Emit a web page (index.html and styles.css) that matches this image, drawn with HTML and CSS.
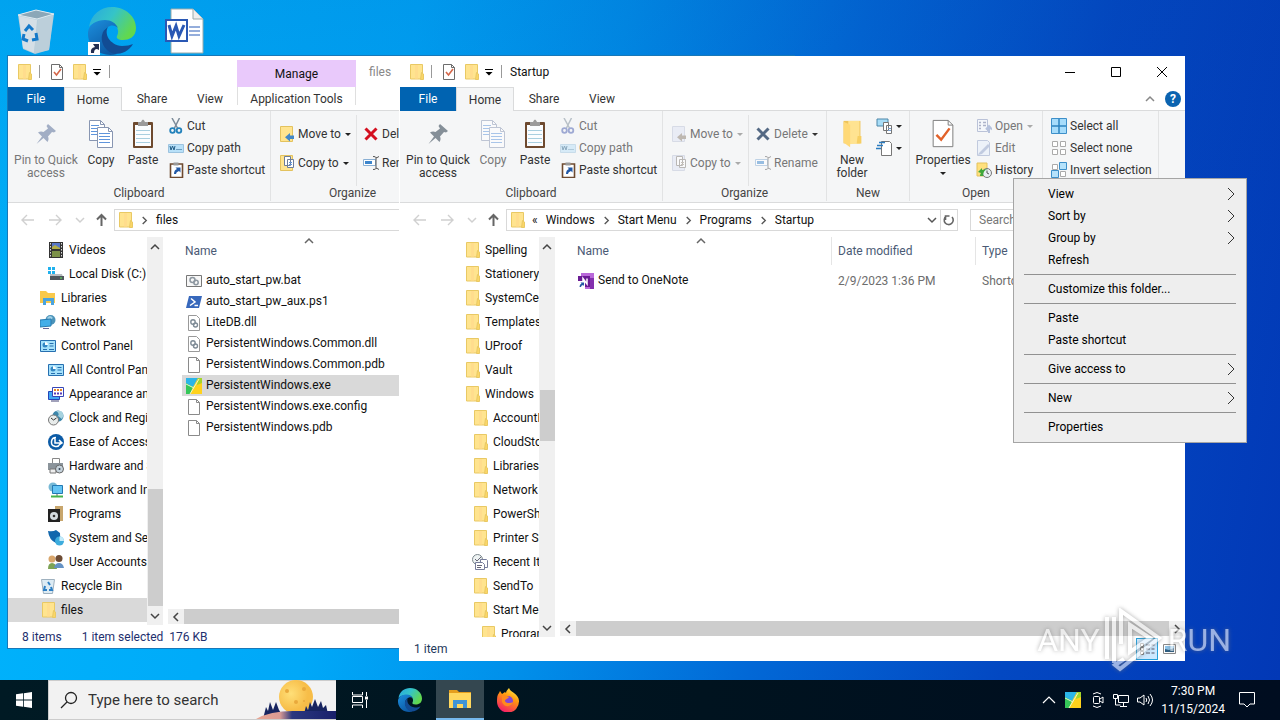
FILE: index.html
```
<!DOCTYPE html>
<html lang="en">
<head>
	<meta charset="UTF-8">
	<title>Startup</title>
	<link rel="stylesheet" href="styles.css">
</head>
<body>
	<!-- icons -->
	<svg class="sprite" aria-hidden="true">
		<symbol id="folder" viewBox="-1 0 16 16"><path d="M1.500.5h12v14.500h-12z" fill="#ffe48f" stroke="#e9c964"/><path d="M12.500 8.500l2 1.500v5.500h-3z" fill="#fbd667" stroke="#e9c964"/><path d="M6 1h3v14H6z" fill="#ffd98c" opacity=".6"/></symbol>
		<symbol id="bigfolder" viewBox="0 0 24 32"><path d="M3 2h18v24H3z" fill="#eec45c"/><path d="M8 2h12v24l-12 1z" fill="#ffe391"/><path d="M3 3l7 3v24l-7-5z" fill="#ffd977"/><path d="M18 18h4v8h-5z" fill="#f7cf62"/></symbol>
		<symbol id="check" viewBox="0 0 16 16"><path d="M2.500.5h8l3 3v12h-11z" fill="#fff" stroke="#6d6d6d"/><path d="M10.500.5v3h3" fill="none" stroke="#6d6d6d"/><path d="M5 8l2.500 3L12 5" fill="none" stroke="#d4674a" stroke-width="1.600"/></symbol>
		<symbol id="properties" viewBox="0 0 24 32"><path d="M1.500 1.500h16l5 5v23h-21z" fill="#fff" stroke="#777"/><path d="M17.500 1.500v5h5" fill="none" stroke="#777"/><path d="M5 17l5 5 9-12" fill="none" stroke="#e2622a" stroke-width="2.600"/></symbol>
		<symbol id="pin" viewBox="0 0 24 24"><path d="M14 2l8 7-2 1.500-2-.5-4 4.500c1 2 .5 4-.5 5.500l-4-4-7 6 5.500-7.500L4 10.500c1.500-1 3.500-1.500 5.500-.5L14 6.500 12.500 4z" fill="currentColor"/></symbol>
		<symbol id="copy" viewBox="0 0 26 30"><g fill="#fff" stroke="#8896b2"><path d="M1.500 1.500h11l4 4v16h-15z"/><path d="M12.500 1.500v4h4" fill="none"/><path d="M9.500 8.500h11l4 4v16h-15z"/><path d="M20.500 8.500v4h4" fill="none"/></g><path d="M3 6.500h8M3 9.500h6M3 12.500h6M3 15.500h6M11 14.500h11M11 17.500h11M11 20.500h11M11 23.500h11" stroke="#5f95dc"/></symbol>
		<symbol id="paste" viewBox="0 0 24 30"><rect x="2" y="3" width="20" height="26" rx="1" fill="#6e4a2f"/><path d="M4 6h16v21H4z" fill="#fbfdff"/><path d="M5 11.500h14M5 15.500h14M5 19.500h14M5 23.500h14" stroke="#a9cfe0"/><path d="M7 3h3q2-5 4 0h3v4H7z" fill="#9b9b9b"/></symbol>
		<symbol id="cut" viewBox="0 0 16 16"><path d="M4 0l6 11M11.500 0L6 11" stroke="#7c8b99" stroke-width="1.500"/><g fill="none" stroke="currentColor" stroke-width="1.800"><circle cx="4.500" cy="12.500" r="2.300"/><circle cx="11" cy="12.500" r="2.300"/></g></symbol>
		<symbol id="path" viewBox="0 0 16 16"><path d="M.5 4.500h15v8H.5z" fill="#b8e0f8" stroke="#9cc3df"/><path d="M2 6l1 4 1.500-4L6 10l1-4" fill="none" stroke="#205b84"/><path d="M8.500 9.500h5" stroke="#205b84" stroke-dasharray="1 1"/></symbol>
		<symbol id="shortcut" viewBox="0 0 16 16"><path d="M2.500 2h12v13.500h-12z" fill="#fff" stroke="#6e4a2f" stroke-width="1.600"/><path d="M5.500.5h5v3h-5z" fill="#999"/><path d="M6 12q0-4 3-5L7.500 5.500h5v5L11 9Q8 10 8 12z" fill="#2258a5"/></symbol>
		<symbol id="moveto" viewBox="0 0 16 16"><path d="M1.500.5h12v15h-12z" fill="#ffe48f" stroke="#e3c25e"/><path d="M15 9.500h-4V7l-5 4.200 5 4.300V13h4z" fill="#4387c7"/></symbol>
		<symbol id="copyto" viewBox="0 0 16 16"><path d="M1.500.5h12v15h-12z" fill="#ffe48f" stroke="#e3c25e"/><path d="M5.500 1.500h6v9h-6zM8.500 4.500h6v8h-6z" fill="#fff" stroke="#6c7c99"/><path d="M10 7.500h3M10 9.500h3" stroke="#5f95dc"/></symbol>
		<symbol id="delete" viewBox="0 0 16 16"><path d="M2.500 2.500l11 11M13.500 2.500l-11 11" stroke="currentColor" stroke-width="3"/></symbol>
		<symbol id="rename" viewBox="0 0 16 16"><path d="M.5 4.500h12v6H.5z" fill="#fff" stroke="#8ab0d4"/><path d="M2 6h7v3H2z" fill="#3c85cc"/><path d="M10 1.500q3 0 3 1t3-1M13 2v12M10 14.500q3 0 3-1t3 1" fill="none" stroke="#555"/></symbol>
		<symbol id="newitem" viewBox="0 0 18 16"><path d="M1 1h11v7H1z" fill="#a8ddf7" stroke="#4c87a9"/><path d="M7.500 4.500h5v8h-5zM10.500 7.500h5v8h-5z" fill="#fff" stroke="#777"/><path d="M12 10.500h3M12 12.500h3" stroke="#7aa0d0"/></symbol>
		<symbol id="easy" viewBox="0 0 18 16"><path d="M5.500 1.500h8l2 2v12h-10z" fill="#fff" stroke="#777"/><path d="M3 2.500h6M1 5.500h6M0 8.500h5" stroke="#2b7cc0" stroke-width="1.500"/></symbol>
		<symbol id="open" viewBox="0 0 16 16"><path d="M1.500 1.500h10v12h-10z" fill="#f4f8ff" stroke="#8190bb"/><path d="M3 4.500h2M3 7.500h2M3 10.500h2M7 4.500h3M7 7.500h3" stroke="#65729c" stroke-width="1.500"/><path d="M13 15V9M10 11.500L13 8l3 3.500" fill="none" stroke="#7890c4" stroke-width="2"/></symbol>
		<symbol id="edit" viewBox="0 0 16 16"><path d="M1.500.5h10l2 2v13h-12z" fill="#e6effc" stroke="#8fa0c6"/><path d="M3 13l9-9 2 2-8 8-4 1z" fill="#8ea2cb"/></symbol>
		<symbol id="history" viewBox="0 0 16 16"><path d="M1 1h10v13H1z" fill="#ffe07d" stroke="#e3c25e"/><circle cx="11" cy="11" r="4.500" fill="#e8eef2" stroke="#777"/><path d="M11 8.500V11l2 1" stroke="#555" fill="none"/><path d="M2 10l4-4v2q4-1 6-1-5 1-5 7H4q0-2 1-3z" fill="#3fa63b"/></symbol>
		<symbol id="selall" viewBox="0 0 16 16"><path d="M.5.5h15v15H.5z" fill="#a6dcfb" stroke="#3d8fc9"/><path d="M8 1v14M1 8h14" stroke="#2c82c0" stroke-width="1.500"/></symbol>
		<symbol id="selnone" viewBox="0 0 16 16"><path d="M1.500 1.500h5v5h-5zM9.500 1.500h5v5h-5zM1.500 9.500h5v5h-5zM9.500 9.500h5v5h-5z" fill="#fff" stroke="#aaa"/></symbol>
		<symbol id="invert" viewBox="0 0 16 16"><path d="M1.500 2.500h5v5h-5zM9.500 9.500h5v5h-5z" fill="#fff" stroke="#aaa"/><path d="M8.500.5h7v7h-7zM.5 8.500h7v7h-7z" fill="#b5e2fb" stroke="#3d8fc9"/></symbol>
		<symbol id="left" viewBox="0 0 16 16"><path d="M14 8H2M7 3L2 8l5 5" fill="none" stroke="currentColor" stroke-width="1.400"/></symbol>
		<symbol id="right" viewBox="0 0 16 16"><path d="M1 8h12M8 3l5 5-5 5" fill="none" stroke="currentColor" stroke-width="1.400"/></symbol>
		<symbol id="up" viewBox="0 0 16 16"><path d="M7.500 14V3M3 7.500L7.500 3 12 7.500" fill="none" stroke="#666" stroke-width="2"/></symbol>
		<symbol id="cup" viewBox="0 0 10 10"><path d="M1 7l4-4 4 4" fill="none" stroke="currentColor" stroke-width="1.500"/></symbol>
		<symbol id="cdown" viewBox="0 0 10 10"><path d="M1 3l4 4 4-4" fill="none" stroke="currentColor" stroke-width="1.500"/></symbol>
		<symbol id="cleft" viewBox="0 0 10 10"><path d="M7 1L3 5l4 4" fill="none" stroke="currentColor" stroke-width="1.500"/></symbol>
		<symbol id="cright" viewBox="0 0 10 10"><path d="M3 1l4 4-4 4" fill="none" stroke="currentColor" stroke-width="1.500"/></symbol>
		<symbol id="subm" viewBox="0 0 10 14"><path d="M2 1l6 6-6 6" fill="none" stroke="#333"/></symbol>
		<symbol id="refresh" viewBox="0 0 16 16"><path d="M5 4.500A4.500 4.500 0 1 0 11 5M4.500 8V4h4" fill="none" stroke="#666" stroke-width="1.600"/></symbol>
		<symbol id="custom" viewBox="0 0 10 10"><path d="M1 2.500h8" stroke="#000"/><path d="M1.500 5h7L5 8.500z"/></symbol>
		<!-- tree icons -->
		<symbol id="video" viewBox="0 0 16 16"><path d="M1 0h14v16H1z" fill="#333"/><path d="M4 1h8v6H4z" fill="#5877c7"/><path d="M4 9h8v6H4z" fill="#7c9148"/><path d="M2.500 1v14M13.500 1v14" stroke="#ddd" stroke-dasharray="1.500 1.500"/><path d="M4 5l3-2 5 3v1H4z" fill="#b3ae44"/></symbol>
		<symbol id="disk" viewBox="0 0 16 16"><path d="M0 1h3v3H0zM4 1h3v3H4zM0 5h3v3H0zM4 5h3v3H4z" fill="#1fb1ee"/><path d="M2 8h12l1 3H2z" fill="#b8bcc0"/><path d="M2 10h14v4H2z" fill="#50565b"/><path d="M12 12h2" stroke="#5ee95c"/></symbol>
		<symbol id="library" viewBox="0 0 16 16"><path d="M0 1h6l2 2h7v10H0z" fill="#f9c94b"/><path d="M3 8h11v7h-3v-4H6v4H3z" fill="#4aa3df"/></symbol>
		<symbol id="network" viewBox="0 0 16 16"><circle cx="10.500" cy="6" r="5" fill="#4b93b9"/><path d="M7 4q3-4 6 0-3 1-2 5z" fill="#9fd0e6"/><path d="M0 6l11-1v7L0 13z" fill="#43aee9" stroke="#287aaf"/><path d="M3 14.500h6" stroke="#669"/></symbol>
		<symbol id="cpanel" viewBox="0 0 16 16"><path d="M.5 2.500h15v11H.5z" fill="#a5e1fb" stroke="#266fb0"/><circle cx="5" cy="7" r="2.500" fill="#3487c4"/><path d="M5 7V4a3 3 0 0 1 3 3z" fill="#fff"/><path d="M9.500 5.500h4M9.500 8h4M3 11.500h4M9 11.500h5" stroke="#276fae"/></symbol>
		<symbol id="appear" viewBox="0 0 16 16"><path d="M.5 5.500h11v8H.5z" fill="#40a7f2" stroke="#2444b8"/><path d="M4.500 1.500h11v9h-11z" fill="#fff" stroke="#3846b6"/><path d="M6 4h2M9 4h2M12 4h2" stroke="#e88626" stroke-width="2"/><path d="M6 7.500h2M9 7.500h2M12 7.500h2" stroke="#5b3bb8" stroke-width="2"/><path d="M3 15h8" stroke="#447"/></symbol>
		<symbol id="clock" viewBox="0 0 16 16"><circle cx="10" cy="6" r="5.500" fill="#3c86ab"/><path d="M8 1q4 2 2 5l4 3q3-5-1-8z" fill="#a7d3df"/><circle cx="5.500" cy="10" r="5" fill="#e8eceb" stroke="#777"/><path d="M5.500 10L3 8M5.500 10l3-2" stroke="#333"/></symbol>
		<symbol id="ease" viewBox="0 0 16 16"><circle cx="8" cy="8" r="8" fill="#0c5ba6"/><path d="M8 3.500a4.500 4.500 0 1 0 4 6.500M7 4v5h7M11 6l3 3-3 2" fill="none" stroke="#fff" stroke-width="1.500"/></symbol>
		<symbol id="hardware" viewBox="0 0 16 16"><path d="M4.500.5h7v6h-7z" fill="#fff" stroke="#888"/><path d="M0 5h15v7H0z" fill="#8b949b"/><path d="M2 11h6v4H2z" fill="#eee" stroke="#777"/><circle cx="11.500" cy="11" r="4" fill="#c5d2db" stroke="#666"/><circle cx="11.500" cy="11" r="1" fill="#345"/></symbol>
		<symbol id="netint" viewBox="0 0 16 16"><circle cx="5" cy="5" r="4.500" fill="#77b9d6"/><path d="M4.500 3.500h10v8h-10z" fill="#63c4f4" stroke="#2379b3"/><path d="M9 12v2" stroke="#666"/><path d="M3 14.500h12" stroke="#46b34b" stroke-width="2"/></symbol>
		<symbol id="programs" viewBox="0 0 16 16"><path d="M7 0h8v15H7z" fill="#c8a66d"/><path d="M0 3h12v13H0z" fill="#222"/><circle cx="6" cy="10" r="4" fill="#d5dce1"/><circle cx="6" cy="10" r="1.300" fill="#333"/></symbol>
		<symbol id="security" viewBox="0 0 16 16"><path d="M0 1q5 1 8-1l4 3q1 8-4 10-7-3-8-12z" fill="#1167ad"/><circle cx="11.500" cy="11" r="4.500" fill="#3dacdd"/><path d="M11.500 11V6.500A4.500 4.500 0 0 1 16 11z" fill="#c4ebfa"/></symbol>
		<symbol id="users" viewBox="0 0 16 16"><circle cx="4" cy="5" r="3.500" fill="#d9a66c"/><path d="M0 15q0-6 4-6t5 6z" fill="#7da354"/><circle cx="11" cy="4.500" r="3.500" fill="#6d4b34"/><path d="M6 14q1-5 5-5t5 5z" fill="#6592c4"/></symbol>
		<symbol id="bin" viewBox="0 0 16 16"><path d="M1.500 1.500h13l-2 14h-9z" fill="#dcebf4" stroke="#9fb1bf"/><path d="M8 4l2 3M11 9l1 3H9M7 12H4l1-4" fill="none" stroke="#2d7fc4" stroke-width="2"/></symbol>
		<symbol id="recent" viewBox="0 0 16 16"><circle cx="5.500" cy="5.500" r="5" fill="#eef3f3" stroke="#7c878c"/><path d="M3 5l2 2 4-4" fill="none" stroke="#667"/><path d="M8.500 5.500h6l1 1v7h-7z" fill="#fff" stroke="#777d9b"/><path d="M3.500 8.500h7l2 2v5h-9z" fill="#fff" stroke="#777d9b"/><path d="M5 11.500h5M5 13.500h4" stroke="#667"/></symbol>
		<!-- file icons -->
		<symbol id="bat" viewBox="0 0 16 16"><path d="M.5 2.500h15v11H.5z" fill="#f7f7f7" stroke="#777"/><circle cx="6.500" cy="7" r="2.500" fill="none" stroke="#8d97a0" stroke-width="1.500"/><circle cx="10" cy="9.500" r="2.200" fill="none" stroke="#8d97a0" stroke-width="1.500"/></symbol>
		<symbol id="ps1" viewBox="0 0 16 16"><path d="M3 2h13l-3 12H0z" fill="#3768bc"/><path d="M5 4.500l4 3.500-5 3.500M8.500 11.500H12" fill="none" stroke="#fff" stroke-width="1.500"/></symbol>
		<symbol id="dll" viewBox="0 0 16 16"><path d="M2.500.5h8l3 3v12h-11z" fill="#fff" stroke="#999"/><circle cx="7" cy="7" r="2.200" fill="none" stroke="#7e8b96" stroke-width="1.400"/><circle cx="9.500" cy="10" r="2" fill="none" stroke="#7e8b96" stroke-width="1.400"/></symbol>
		<symbol id="file" viewBox="0 0 16 16"><path d="M2.500.5h8l3 3v12h-11z" fill="#fff" stroke="#8a8a8a"/><path d="M10.500.5v3h3" fill="none" stroke="#8a8a8a"/></symbol>
		<symbol id="exe" viewBox="0 0 16 16"><path d="M0 0h16v16H0z" fill="#ffd21c"/><path d="M0 0h12L7 9 0 6z" fill="#2bb5e8"/><path d="M0 5l7 4-3 7H0z" fill="#35c759"/><path d="M12 0h4v5l-5 2z" fill="#a4d62b"/><path d="M13 1L4 16M0 6l8 4" stroke="#e9f7c8"/></symbol>
		<symbol id="onenote" viewBox="0 0 16 16"><path d="M3 0h13v16H3z" fill="#b968d9"/><path d="M12 5h4v11h-4z" fill="#8430ae"/><path d="M0 3h12v11H0z" fill="#6a1c94"/><path d="M5 10V5.500l4 5.500V5.500" fill="none" stroke="#fff" stroke-width="1.500"/><path d="M0 8h7v8H0z" fill="#fff"/><path d="M1.500 14q0-3 2-3.500L2.500 9.500H6V13L5 12q-2 .5-2 2z" fill="#2258a5"/></symbol>
		<!-- app logos -->
		<symbol id="edge" viewBox="0 0 48 48">
			<defs>
				<linearGradient id="ga" x1="0" y1="0" x2="1" y2=".5"><stop offset="0" stop-color="#28a8e0"/><stop offset=".5" stop-color="#35c4c8"/><stop offset="1" stop-color="#62d84e"/></linearGradient>
				<linearGradient id="gb" x1="0" y1="0" x2=".6" y2="1"><stop offset="0" stop-color="#1c8fdd"/><stop offset="1" stop-color="#0c59a4"/></linearGradient>
			</defs>
			<path d="M1 20C3 7 13 0 24 0c14 0 24 10 24 21 0 9-7 12-13 12-5 0-7-2-6-4 3-5 0-13-8-14C12 13 4 16 1 20z" fill="url(#ga)"/>
			<path d="M0 25c1-8 9-12 17-12 6 0 11 3 13 8-2-2-5-3-8-2-6 2-9 8-7 15 2 6 7 11 14 13C14 51-1 41 0 25z" fill="url(#gb)"/>
			<path d="M20 20c-4 6 1 18 14 19 5 0 8-1 11-2-4 7-11 10-18 10-10-2-16-13-12-22 1-2 3-4 5-5z" fill="#124c94"/>
		</symbol>
		<symbol id="explorer" viewBox="0 0 24 20"><path d="M1 1h8l2 2h12v5H1z" fill="#e59e1d"/><path d="M1 4h22v15H1z" fill="#ffd75e"/><path d="M5 11h14v8h-4v-4H9v4H5z" fill="#4094d5"/></symbol>
		<symbol id="firefox" viewBox="0 0 24 24">
			<defs><linearGradient id="gf" x1=".8" y1="0" x2=".3" y2="1"><stop offset="0" stop-color="#fff04a"/><stop offset=".4" stop-color="#ff980e"/><stop offset="1" stop-color="#f5196b"/></linearGradient></defs>
			<path d="M3 5l1-2 2 3 3-2 1 1c0-2 2-4 3-5 1 3 4 4 5 5 3 2 5 5 5 8a11 11 0 0 1-22 1C1 10 1 7 3 5z" fill="url(#gf)"/><circle cx="12" cy="13" r="5" fill="#8347d6"/><path d="M6 8c3-2 5 0 7 1-1 2-4 2-4 4s5 3 8 1c-1 5-9 6-11 0z" fill="#ff8a1e"/>
		</symbol>
	</svg>

	<main class="desk">
		<div class="shortcuts">
			<svg viewBox="0 0 48 48" aria-label="Recycle Bin">
				<path d="M6 8l18-5 18 4-5 36-14 4-12-5z" fill="#b5cddb"/><path d="M6 8l18-5 18 4-17 5z" fill="#8ba7b8" stroke="#dfeaf0"/><path d="M7 9l18 4-3 33-11-5z" fill="#d5dfe6"/><path d="M26 13l15-5-4 35-15 3z" fill="#bccfda"/>
				<g fill="none" stroke="#1479c9" stroke-width="3"><path d="M13 24l4-5 4 4M24 26l1 6-5 1M12 27l-1 5 5 2"/></g>
			</svg>
			<svg viewBox="0 0 48 48" aria-label="Microsoft Edge"><use href="#edge"/><path d="M0 35h12v13H0z" fill="#fff"/><path d="M3 46q-1-5 4-6l-2-3h6v6l-2-1q-3 0-3 4z" fill="#222d50"/></svg>
			<svg viewBox="8 0 48 48" aria-label="Word document"><path d="M15 2h22l10 10v34H15z" fill="#fff" stroke="#9aa"/><path d="M37 2v10h10" fill="#eee" stroke="#9aa"/><path d="M33 20h11M33 24h11M33 28h11" stroke="#2b5db8"/><path d="M10 13h21v21H10z" fill="#fff" stroke="#2a58b4" stroke-width="2"/><path d="M13 18l3 11 4-10 3 10 5-11" fill="none" stroke="#2a58b4" stroke-width="3"/></svg>
		</div>

		<section class="window win1" aria-label="files">
			<header class="titlebar">
				<svg class="i"><use href="#folder"/></svg><i class="bar"></i>
				<svg class="i"><use href="#check"/></svg><svg class="i"><use href="#folder"/></svg><svg class="tiny"><use href="#custom"/></svg><i class="bar"></i>
				<div class="manage">Manage</div>
				<h1 class="inactive">files</h1>
			</header>
			<nav class="tabs">
				<button class="file">File</button><button class="on">Home</button><button>Share</button><button>View</button><button class="apptools">Application Tools</button>
			</nav>
			<div class="ribbon">
				<div class="group clip">
					<div class="tools">
						<button class="big off"><svg class="pin"><use href="#pin"/></svg><span>Pin to Quick<br>access</span></button>
						<button class="big narrow"><svg><use href="#copy"/></svg><span>Copy</span></button>
						<button class="big narrow"><svg><use href="#paste"/></svg><span>Paste</span></button>
						<div class="stack">
							<button><svg class="i blue"><use href="#cut"/></svg>Cut</button>
							<button><svg class="i"><use href="#path"/></svg>Copy path</button>
							<button><svg class="i"><use href="#shortcut"/></svg>Paste shortcut</button>
						</div>
					</div>
					<p>Clipboard</p>
				</div>
				<div class="group org">
					<div class="tools">
						<div class="stack two">
							<button><svg class="i"><use href="#moveto"/></svg>Move to<b></b></button>
							<button><svg class="i"><use href="#copyto"/></svg>Copy to<b></b></button>
						</div>
						<div class="stack two second">
							<button><svg class="i red"><use href="#delete"/></svg>Delete<b></b></button>
							<button><svg class="i"><use href="#rename"/></svg>Rename</button>
						</div>
					</div>
					<p>Organize</p>
				</div>
			</div>
			<div class="address">
				<button class="nav dim" aria-label="Back"><svg class="i"><use href="#left"/></svg></button>
				<button class="nav dim" aria-label="Forward"><svg class="i"><use href="#right"/></svg></button>
				<button class="recent dim" aria-label="Recent locations"><svg class="tiny"><use href="#cdown"/></svg></button>
				<button class="nav parent" aria-label="Up"><svg class="i"><use href="#up"/></svg></button>
				<div class="crumbs"><svg class="i"><use href="#folder"/></svg><svg class="sep"><use href="#cright"/></svg><a href="#">files</a></div>
			</div>
			<div class="body">
				<ul class="tree">
					<li class="l2"><svg class="i"><use href="#video"/></svg>Videos</li>
					<li class="l2"><svg class="i"><use href="#disk"/></svg>Local Disk (C:)</li>
					<li><svg class="i"><use href="#library"/></svg>Libraries</li>
					<li><svg class="i"><use href="#network"/></svg>Network</li>
					<li><svg class="i"><use href="#cpanel"/></svg>Control Panel</li>
					<li class="l2"><svg class="i"><use href="#cpanel"/></svg>All Control Panel Items</li>
					<li class="l2"><svg class="i"><use href="#appear"/></svg>Appearance and Personalization</li>
					<li class="l2"><svg class="i"><use href="#clock"/></svg>Clock and Region</li>
					<li class="l2"><svg class="i"><use href="#ease"/></svg>Ease of Access</li>
					<li class="l2"><svg class="i"><use href="#hardware"/></svg>Hardware and Sound</li>
					<li class="l2"><svg class="i"><use href="#netint"/></svg>Network and Internet</li>
					<li class="l2"><svg class="i"><use href="#programs"/></svg>Programs</li>
					<li class="l2"><svg class="i"><use href="#security"/></svg>System and Security</li>
					<li class="l2"><svg class="i"><use href="#users"/></svg>User Accounts</li>
					<li><svg class="i"><use href="#bin"/></svg>Recycle Bin</li>
					<li class="sel"><svg class="i"><use href="#folder"/></svg>files</li>
				</ul>
				<div class="vscroll"><svg class="tiny"><use href="#cup"/></svg><i class="low"></i><svg class="tiny"><use href="#cdown"/></svg></div>
				<div class="pane">
					<svg class="sort"><use href="#cup"/></svg>
					<table>
						<thead><tr><th>Name</th></tr></thead>
						<tbody>
							<tr><td><svg class="i"><use href="#bat"/></svg>auto_start_pw.bat</td></tr>
							<tr><td><svg class="i"><use href="#ps1"/></svg>auto_start_pw_aux.ps1</td></tr>
							<tr><td><svg class="i"><use href="#dll"/></svg>LiteDB.dll</td></tr>
							<tr><td><svg class="i"><use href="#dll"/></svg>PersistentWindows.Common.dll</td></tr>
							<tr><td><svg class="i"><use href="#file"/></svg>PersistentWindows.Common.pdb</td></tr>
							<tr class="sel"><td><svg class="i"><use href="#exe"/></svg>PersistentWindows.exe</td></tr>
							<tr><td><svg class="i"><use href="#file"/></svg>PersistentWindows.exe.config</td></tr>
							<tr><td><svg class="i"><use href="#file"/></svg>PersistentWindows.pdb</td></tr>
						</tbody>
					</table>
					<div class="hscroll"><svg class="tiny"><use href="#cleft"/></svg><i></i><svg class="tiny"><use href="#cright"/></svg></div>
				</div>
			</div>
			<footer class="status"><span class="count">8 items</span><span>1 item selected</span><span>176 KB</span></footer>
		</section>

		<section class="window win2" aria-label="Startup">
			<header class="titlebar">
				<svg class="i"><use href="#folder"/></svg><i class="bar"></i>
				<svg class="i"><use href="#check"/></svg><svg class="i"><use href="#folder"/></svg><svg class="tiny"><use href="#custom"/></svg><i class="bar"></i>
				<h1>Startup</h1>
				<div class="controls">
					<button aria-label="Minimize"><svg viewBox="0 0 10 10"><path d="M0 5.500h10" stroke="#000"/></svg></button>
					<button aria-label="Maximize"><svg viewBox="0 0 10 10"><path d="M.5.5h9v9h-9z" fill="none" stroke="#000"/></svg></button>
					<button aria-label="Close"><svg viewBox="0 0 10 10"><path d="M0 0l10 10M10 0L0 10" stroke="#000"/></svg></button>
				</div>
			</header>
			<nav class="tabs">
				<button class="file">File</button><button class="on">Home</button><button>Share</button><button>View</button>
				<div class="help"><svg class="tiny"><use href="#cup"/></svg><button class="q" aria-label="Help">?</button></div>
			</nav>
			<div class="ribbon">
				<div class="group clip">
					<div class="tools">
						<button class="big"><svg class="pin"><use href="#pin"/></svg><span>Pin to Quick<br>access</span></button>
						<button class="big narrow off"><svg><use href="#copy"/></svg><span>Copy</span></button>
						<button class="big narrow"><svg><use href="#paste"/></svg><span>Paste</span></button>
						<div class="stack">
							<button class="off"><svg class="i indigo"><use href="#cut"/></svg>Cut</button>
							<button class="off"><svg class="i"><use href="#path"/></svg>Copy path</button>
							<button><svg class="i"><use href="#shortcut"/></svg>Paste shortcut</button>
						</div>
					</div>
					<p>Clipboard</p>
				</div>
				<div class="group org">
					<div class="tools">
						<div class="stack two">
							<button class="off gray"><svg class="i"><use href="#moveto"/></svg>Move to<b></b></button>
							<button class="off gray"><svg class="i"><use href="#copyto"/></svg>Copy to<b></b></button>
						</div>
						<div class="stack two second">
							<button class="off dark"><svg class="i steel"><use href="#delete"/></svg>Delete<b></b></button>
							<button class="off"><svg class="i"><use href="#rename"/></svg>Rename</button>
						</div>
					</div>
					<p>Organize</p>
				</div>
				<div class="group new">
					<div class="tools">
						<button class="big narrow"><svg><use href="#bigfolder"/></svg><span>New<br>folder</span></button>
						<div class="stack">
							<button aria-label="New item"><svg class="i wide"><use href="#newitem"/></svg><b></b></button>
							<button aria-label="Easy access"><svg class="i wide"><use href="#easy"/></svg><b></b></button>
						</div>
					</div>
					<p>New</p>
				</div>
				<div class="group opn">
					<div class="tools">
						<button class="big mid"><svg><use href="#properties"/></svg><span>Properties<b></b></span></button>
						<div class="stack">
							<button class="off"><svg class="i"><use href="#open"/></svg>Open<b></b></button>
							<button class="off"><svg class="i"><use href="#edit"/></svg>Edit</button>
							<button><svg class="i"><use href="#history"/></svg>History</button>
						</div>
					</div>
					<p>Open</p>
				</div>
				<div class="group select">
					<div class="tools">
						<div class="stack">
							<button><svg class="i"><use href="#selall"/></svg>Select all</button>
							<button><svg class="i"><use href="#selnone"/></svg>Select none</button>
							<button><svg class="i"><use href="#invert"/></svg>Invert selection</button>
						</div>
					</div>
					<p>Select</p>
				</div>
			</div>
			<div class="address">
				<button class="nav dim" aria-label="Back"><svg class="i"><use href="#left"/></svg></button>
				<button class="nav dim" aria-label="Forward"><svg class="i"><use href="#right"/></svg></button>
				<button class="recent dim" aria-label="Recent locations"><svg class="tiny"><use href="#cdown"/></svg></button>
				<button class="nav parent" aria-label="Up"><svg class="i"><use href="#up"/></svg></button>
				<div class="crumbs">
					<svg class="i"><use href="#folder"/></svg><span class="more">«</span>
					<a href="#">Windows</a><svg class="sep"><use href="#cright"/></svg><a href="#">Start Menu</a><svg class="sep"><use href="#cright"/></svg><a href="#">Programs</a><svg class="sep"><use href="#cright"/></svg><a href="#">Startup</a>
					<button class="drop" aria-label="Previous locations"><svg class="tiny"><use href="#cdown"/></svg></button>
					<button class="reload" aria-label="Refresh"><svg class="i"><use href="#refresh"/></svg></button>
				</div>
				<input class="find" type="search" placeholder="Search Startup" aria-label="Search Startup">
			</div>
			<div class="body">
				<ul class="tree">
					<li><svg class="i"><use href="#folder"/></svg>Spelling</li>
					<li><svg class="i"><use href="#folder"/></svg>Stationery</li>
					<li><svg class="i"><use href="#folder"/></svg>SystemCertificates</li>
					<li><svg class="i"><use href="#folder"/></svg>Templates</li>
					<li><svg class="i"><use href="#folder"/></svg>UProof</li>
					<li><svg class="i"><use href="#folder"/></svg>Vault</li>
					<li><svg class="i"><use href="#folder"/></svg>Windows</li>
					<li class="l2"><svg class="i"><use href="#folder"/></svg>AccountPictures</li>
					<li class="l2"><svg class="i"><use href="#folder"/></svg>CloudStore</li>
					<li class="l2"><svg class="i"><use href="#folder"/></svg>Libraries</li>
					<li class="l2"><svg class="i"><use href="#folder"/></svg>Network Shortcuts</li>
					<li class="l2"><svg class="i"><use href="#folder"/></svg>PowerShell</li>
					<li class="l2"><svg class="i"><use href="#folder"/></svg>Printer Shortcuts</li>
					<li class="l2"><svg class="i"><use href="#recent"/></svg>Recent Items</li>
					<li class="l2"><svg class="i"><use href="#folder"/></svg>SendTo</li>
					<li class="l2"><svg class="i"><use href="#folder"/></svg>Start Menu</li>
					<li class="l3"><svg class="i"><use href="#folder"/></svg>Programs</li>
				</ul>
				<div class="vscroll"><svg class="tiny"><use href="#cup"/></svg><i class="mid"></i><svg class="tiny"><use href="#cdown"/></svg></div>
				<div class="pane">
					<svg class="sort"><use href="#cup"/></svg>
					<table>
						<thead><tr><th class="c1">Name</th><th class="c2">Date modified</th><th>Type</th></tr></thead>
						<tbody><tr><td><svg class="i"><use href="#onenote"/></svg>Send to OneNote</td><td class="meta">2/9/2023 1:36 PM</td><td class="meta">Shortcut</td></tr></tbody>
					</table>
					<div class="hscroll"><svg class="tiny"><use href="#cleft"/></svg><i></i><svg class="tiny"><use href="#cright"/></svg></div>
				</div>
			</div>
			<footer class="status">
				<span class="count">1 item</span>
				<div class="views">
					<button class="on" aria-label="Details"><svg viewBox="0 0 16 14"><path d="M1.500 1.500h3v3h-3zM1.500 5.500h3v3h-3zM1.500 9.500h3v3h-3z" fill="#fff" stroke="#777"/><path d="M7 3h4M7 7h4M7 11h4M12.500 3h3M12.500 7h3M12.500 11h3" stroke="#556"/></svg></button>
					<button aria-label="Large icons"><svg viewBox="0 0 16 14"><path d="M2.500 2.500h12v9h-12z" fill="#fff" stroke="#888"/><path d="M4 4h9v6H4z" fill="#8dc4ea"/><path d="M4 7l4 1 5-2v4H4z" fill="#2b5c80"/></svg></button>
				</div>
			</footer>
		</section>

		<ul class="menu">
			<li><button>View<svg><use href="#subm"/></svg></button></li>
			<li><button>Sort by<svg><use href="#subm"/></svg></button></li>
			<li><button>Group by<svg><use href="#subm"/></svg></button></li>
			<li><button>Refresh</button></li>
			<li class="line"></li>
			<li><button>Customize this folder...</button></li>
			<li class="line"></li>
			<li><button>Paste</button></li>
			<li><button>Paste shortcut</button></li>
			<li class="line"></li>
			<li><button>Give access to<svg><use href="#subm"/></svg></button></li>
			<li class="line"></li>
			<li><button>New<svg><use href="#subm"/></svg></button></li>
			<li class="line"></li>
			<li><button>Properties</button></li>
		</ul>

		<div class="watermark">
			<span>ANY</span>
			<svg viewBox="0 0 60 64"><g fill="none" stroke="#fff" stroke-width="4"><path d="M3 9v42M10 9v46M17 36V3l38 27-39 31-5-4 9-6M26 17v27l20-14z"/></g></svg>
			<span>RUN</span>
		</div>
	</main>

	<footer class="taskbar">
		<button class="start" aria-label="Start"><svg viewBox="0 0 16 16"><path d="M0 2.300L7 1.300V7.600H0zM7.800 1.200L16 0v7.600H7.800zM0 8.400h7v6.300L0 13.700zM7.800 8.400H16V16l-8.200-1.200z" fill="#fff"/></svg></button>
		<label class="search">
			<svg class="glass" viewBox="0 0 18 18"><circle cx="11" cy="7" r="5.500" fill="none" stroke="#222" stroke-width="1.300"/><path d="M7 11l-6 6" stroke="#222" stroke-width="1.300"/></svg>
			<input type="text" placeholder="Type here to search" aria-label="Type here to search">
			<svg class="moon" viewBox="0 0 80 39">
				<defs>
					<radialGradient id="gm" cx=".35" cy=".4"><stop offset="0" stop-color="#ffdf78"/><stop offset="1" stop-color="#f7bd48"/></radialGradient>
					<linearGradient id="gh"><stop offset="0" stop-color="#e8a592"/><stop offset=".3" stop-color="#d99a94"/><stop offset=".45" stop-color="#2b387f"/><stop offset="1" stop-color="#19206b"/></linearGradient>
				</defs>
				<circle cx="40" cy="17" r="17" fill="url(#gm)"/><g fill="#e9a93c"><circle cx="40" cy="22" r="2"/><circle cx="48" cy="9" r="2"/><circle cx="31" cy="11" r="2"/><circle cx="48" cy="21" r="1"/></g>
				<path d="M7 39l2-8 1-4 2 4 2-9 3 8 3-8 3 8 2 3v6zM48 34l2-8 2 4 2-8 2 5 3-8 3 8 3-6 2 7 3-3 2 9z" fill="#17245f"/>
				<path d="M0 39q14-8 37-8 18 0 43 0v8z" fill="url(#gh)"/>
			</svg>
		</label>
		<button class="app" aria-label="Task View"><svg class="tv" viewBox="0 0 18 16"><path d="M1.500 0v3h10V0M1.500 16v-3h10v3M1.500 4.500h10v6h-10zM15.500 0v4M15.500 8v8" fill="none" stroke="#fff"/><path d="M14 4.500h3v3h-3z" fill="#fff"/></svg></button>
		<button class="app edge" aria-label="Microsoft Edge"><svg><use href="#edge"/></svg></button>
		<button class="app active" aria-label="File Explorer"><svg><use href="#explorer"/></svg></button>
		<button class="app" aria-label="Firefox"><svg><use href="#firefox"/></svg></button>
		<div class="tray">
			<svg viewBox="0 0 16 16"><path d="M2 11l6-6 6 6" fill="none" stroke="#fff" stroke-width="1.200"/></svg>
			<svg><use href="#exe"/></svg>
			<svg viewBox="0 0 16 16"><rect x="4.500" y="4.500" width="6" height="7" rx="1" fill="none" stroke="#fff"/><path d="M11 7l3-2v6l-3-2M4 2q4-3 8 0M4 14q4 3 8 0" fill="none" stroke="#fff"/></svg>
			<svg viewBox="0 0 16 16"><path d="M5.500 3.500h10v7h-10zM10.500 11v3M7 14.500h7M.5 2.500h4v4h-4zM2.500 7v6h5" fill="none" stroke="#fff"/></svg>
			<svg viewBox="0 0 16 16"><path d="M.5 6v4h2.500L7 13V3L3 6zM9 6q1.500 2 0 4M11 4q3 4 0 8M13 2q5 6 0 12" fill="none" stroke="#fff"/></svg>
			<time>7:30 PM<br>11/15/2024</time>
			<svg class="note" viewBox="0 0 16 16"><path d="M.5.5h15v11.500H11L8 15l-3-3H.5z" fill="none" stroke="#fff"/></svg>
		</div>
	</footer>
</body>
</html>
```
FILE: styles.css
```
*{margin:0;padding:0;box-sizing:border-box;list-style:none;}
body{height:100vh;display:flex;flex-direction:column;overflow:hidden;font:12px/16px Roboto,"Open Sans",sans-serif;color:#111;}
button,input{font:inherit;color:inherit;background:none;border:0;white-space:nowrap;}
a{color:inherit;text-decoration:none;}
svg{flex:none;display:block;}
.sprite{position:absolute;width:0;height:0;}
.i{width:16px;height:16px;}
.tiny{width:10px;height:10px;}

/* desktop */
.desk{flex:1;min-height:0;position:relative;overflow:hidden;background:linear-gradient(rgba(0,60,160,.14),rgba(0,60,160,0) 60%),linear-gradient(100deg,#00b4fc 0%,#00a8f8 30%,#0190ea 45%,#0268d6 62%,#0348c2 80%,#0238b6 100%);}
.shortcuts{display:flex;gap:28px;padding:7px 12px;}
.shortcuts svg{width:48px;height:48px;}
.window{position:absolute;display:flex;flex-direction:column;width:786px;background:#fff;}
.win1{left:8px;top:56px;height:592px;box-shadow:0 0 0 1px #1878b8;}
.win2{left:399px;top:56px;height:605px;padding-left:1px;}

.titlebar{display:flex;align-items:center;height:31px;padding-left:8px;}
.titlebar .bar{width:1px;height:13px;background:#999;margin:0 8px 0 7px;}
.titlebar .bar + .i{margin-right:6px;margin-left:1px;}
.titlebar .tiny{margin-left:5px;}
.titlebar .tiny + .bar{margin-left:7px;}
.titlebar h1{font-size:12px;font-weight:normal;}
.titlebar .inactive{color:#888;margin-left:13px;}
.manage{width:119px;margin-left:119px;align-self:flex-end;height:27px;line-height:28px;text-align:center;background:#e9c9fb;}
.controls{display:flex;margin-left:auto;align-self:stretch;}
.controls button{width:46px;display:flex;align-items:center;justify-content:center;}
.controls svg{width:10px;height:10px;}

.tabs{display:flex;height:24px;border-bottom:1px solid #dadbdc;}
.tabs button{width:56px;height:24px;color:#333;}
.tabs .file{background:#0063b1;color:#fff;}
.tabs .on{width:58px;background:#f5f6f7;border:1px solid #dadbdc;border-bottom:0;}
.tabs .on + button{width:60px;}
.tabs .apptools{width:119px;margin-left:-1px;border:1px solid #dfdfdf;border-width:0 1px;height:18px;line-height:24px;}
.help{display:flex;align-items:center;margin-left:auto;gap:10px;padding-right:4px;color:#888;}
.tabs .help .q{width:16px;height:16px;border-radius:50%;background:#0b63b0;color:#fff;font-weight:bold;line-height:16px;}

.ribbon{display:flex;height:92px;background:#f5f6f7;border-bottom:1px solid #dadbdc;color:#333;}
.group{display:flex;flex-direction:column;border-right:1px solid #e2e3e4;margin-bottom:1px;}
.group p{text-align:center;color:#444;height:15px;line-height:15px;}
.tools{display:flex;height:75px;padding-top:4px;}
.clip{width:263px;}
.org{width:164px;}
.new{width:83px;}
.opn{width:133px;}
.select{width:116px;}
.big{width:68px;display:flex;flex-direction:column;align-items:center;line-height:13px;margin-left:4px;}
.big svg{width:26px;height:30px;margin:4px 0 5px;}
.big .pin{width:24px;height:24px;margin:7px 0 8px;color:#858f98;}
.big span{display:block;}
.big b{display:block;margin:5px auto 0;}
.narrow{width:42px;margin-left:0;}
.mid{width:58px;}
.stack{display:flex;flex-direction:column;padding-left:4px;}
.stack button{display:flex;align-items:center;gap:3px;height:22px;}
.two{width:77px;padding:8px 0 0 8px;gap:7px;}
.second{border-left:1px solid #e2e3e4;padding-left:6px;margin-left:8px;}
.off{color:#777;}
.off svg{opacity:.5;}
.gray svg{filter:grayscale(.8) hue-rotate(180deg);}
.big.off .pin{color:#7f90b0;opacity:.7;}
.blue{color:#2382bb;}
.indigo{color:#4a5fb0;}
.red{color:#d41020;}
.off .steel{color:#2c4768;opacity:.8;}
b{border:3px solid transparent;border-top:3px solid #222;border-bottom:0;width:6px;height:3px;margin-left:1px;}
.off b{border-top-color:#aaa;}
.dark b{border-top-color:#333;}
.new .narrow{margin-left:4px;}
.new .stack{padding-left:3px;}
.new .stack button{gap:1px;}
.wide{width:18px;}
.select .stack{padding-left:8px;}

.address{display:flex;align-items:center;height:34px;padding-left:11px;color:#444;}
.nav{width:28px;display:flex;padding-left:1px;}
.recent{width:18px;}
.parent{width:21px;}
.dim{color:#d0d0d0;}
.crumbs{display:flex;align-items:center;flex:1;height:22px;border:1px solid #d9d9d9;color:#111;padding-left:2px;}
.win2 .crumbs{flex:none;width:452px;}
.crumbs .sep{width:9px;height:9px;margin:0 7px;color:#555;}
.more{margin:0 8px 0 7px;}
.drop{margin-left:auto;width:13px;color:#555;}
.reload{width:17px;align-self:stretch;border-left:1px solid #d9d9d9;display:flex;align-items:center;}
.find{flex:1;min-width:0;height:22px;border:1px solid #d9d9d9;margin:0 6px 0 12px;padding-left:8px;}
.find::placeholder{color:#777;}

.body{display:flex;flex:1;min-height:0;}
.tree{width:139px;overflow:hidden;padding-top:1px;}
.tree li{display:flex;align-items:center;gap:5px;height:24px;padding-left:32px;white-space:nowrap;}
.tree .l2{padding-left:40px;}
.win2 .tree li{padding-left:64px;}
.win2 .tree .l2{padding-left:72px;}
.win2 .tree .l3{padding-left:80px;}
.sel{background:#d9d9d9;}
.vscroll{width:16px;display:flex;flex-direction:column;align-items:center;background:#f0f0f0;padding:5px 0 4px;color:#444;}
.vscroll i{width:15px;background:#cdcdcd;}
.vscroll .low{height:117px;margin:auto 0 5px;}
.vscroll .mid{height:51px;margin:138px 0 auto;}
.pane{flex:1;min-width:0;margin-left:5px;position:relative;display:flex;flex-direction:column;}
.sort{width:10px;height:10px;position:absolute;left:136px;top:-1px;color:#666;}
table{border-collapse:collapse;width:calc(100% - 14px);margin-left:14px;table-layout:fixed;}
th{height:33px;font-weight:normal;text-align:left;padding:0 0 5px 3px;color:#4a5a75;}
.c1{width:257px;}
.c2{width:144px;}
.c2,.c2 + th{padding-left:7px;background:linear-gradient(#e5e5e5,#e5e5e5) 0 0/1px 28px no-repeat;}
td{height:21px;white-space:nowrap;padding:0 0 0 4px;}
td .i{display:inline-block;vertical-align:middle;margin-right:4px;}
.meta{color:#6d6d6d;padding-left:7px;overflow:hidden;}
.hscroll{display:flex;align-items:center;height:15px;margin:auto 0 1px;background:#f0f0f0;color:#444;}
.hscroll .tiny{margin:0 3px;}
.hscroll i{flex:1;height:15px;background:#cdcdcd;}
.status{display:flex;align-items:center;height:23px;padding-left:14px;color:#1e2f6e;gap:6px;}
.status .count{margin-right:14px;}
.win2 .status{height:24px;color:#1e395b;}
.views{display:flex;margin-left:auto;padding-right:5px;}
.views button{width:22px;height:22px;padding:3px;}
.views .on{background:#cce8ff;border:1px solid #26a0da;padding:2px;}
.views svg{width:16px;height:14px;}

/* context menu */
.menu{position:absolute;left:1013px;top:178px;width:234px;padding:4px 10px;background:#eee;border:1px solid #a5a5a5;color:#000;}
.menu button{display:flex;align-items:center;justify-content:space-between;width:100%;height:22px;padding-left:24px;}
.menu svg{width:10px;height:14px;}
.menu .line{height:7px;background:linear-gradient(#919191,#919191) 0 3px/100% 1px no-repeat;}

.watermark{position:absolute;right:49px;bottom:8px;display:flex;align-items:center;gap:4px;opacity:.6;color:#fff;font:32px/60px Roboto,sans-serif;filter:drop-shadow(0 0 2px #777);}
.watermark svg{width:60px;height:64px;}

/* taskbar */
.taskbar{display:flex;height:40px;background:linear-gradient(90deg,#001a24,#00131f 55%,#000d20);color:#fff;}
.start{width:48px;display:flex;align-items:center;justify-content:center;}
.start svg{width:16px;height:16px;}
.search{width:288px;display:flex;align-items:center;background:#f2f2f2;border:1px solid #ccc;border-right:0;color:#333;padding-left:11px;}
.glass{width:18px;height:18px;}
.search input{flex:1;min-width:0;font-size:15px;padding-left:10px;}
.search input::placeholder{color:#333;}
.moon{width:80px;height:39px;align-self:flex-end;}
.app{width:48px;display:flex;align-items:center;justify-content:center;}
.app svg{width:24px;height:24px;}
.app .tv{width:18px;height:16px;}
.app.edge{width:52px;}
.app.active{background:#344750;border-bottom:2px solid #76b9ed;}
.tray{display:flex;align-items:center;margin-left:auto;gap:8px;padding-right:25px;}
.tray svg{width:16px;height:16px;}
.tray time{text-align:center;line-height:18px;}
.tray .note{margin-left:6px;}
```
